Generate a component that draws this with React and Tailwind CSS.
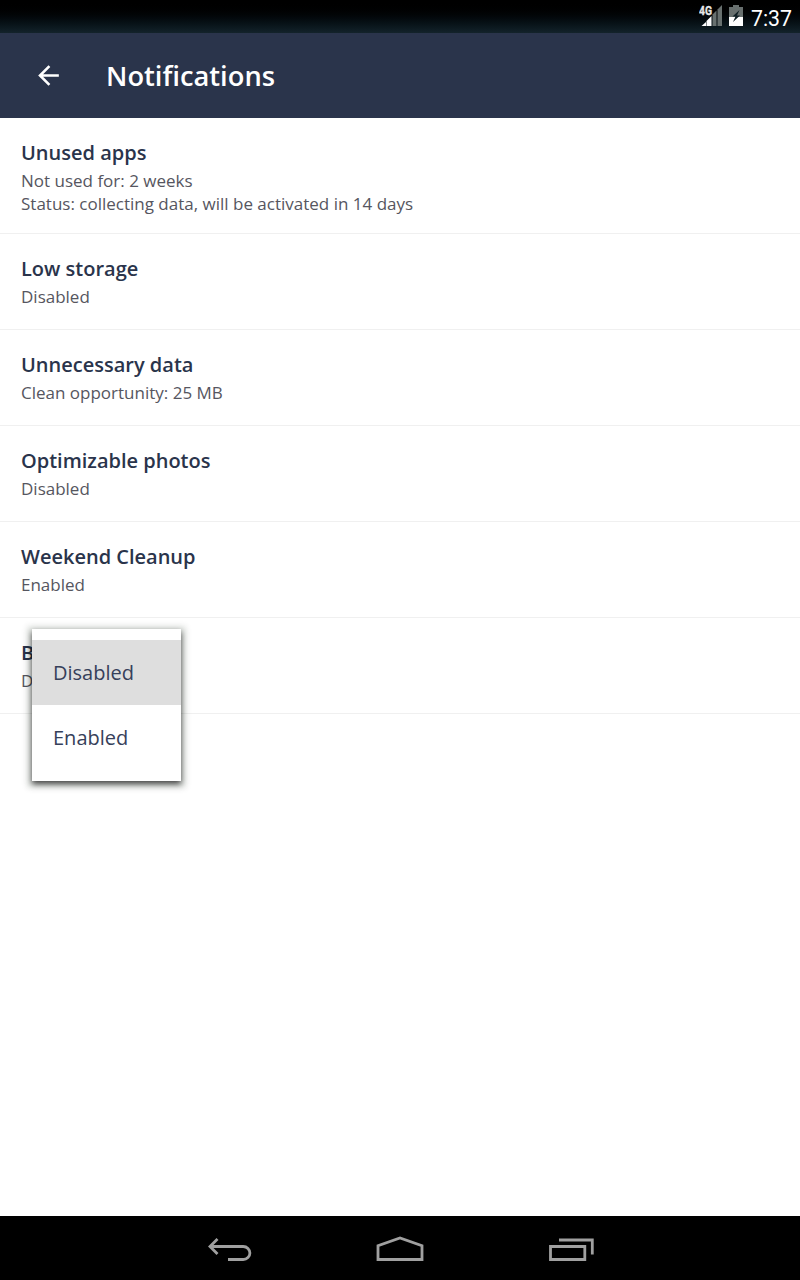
const settings = [
  { title: "Unused apps", lines: ["Not used for: 2 weeks", "Status: collecting data, will be activated in 14 days"] },
  { title: "Low storage", lines: ["Disabled"] },
  { title: "Unnecessary data", lines: ["Clean opportunity: 25 MB"] },
  { title: "Optimizable photos", lines: ["Disabled"] },
  { title: "Weekend Cleanup", lines: ["Enabled"] },
  { title: "B", lines: ["Disabled"] },
];

function SignalIcon() {
  return (
    <svg width="24" height="24" viewBox="0 0 24 24" className="shrink-0">
      <path d="M2.500 22L7 18V22Z" fill="#fff" />
      <path d="M7.500 17L12.500 12V22H7.500Z" fill="#fff" />
      <path d="M13.500 10.500L17.500 6.500V22H13.500Z" fill="#68706f" />
      <path d="M18.500 5.500L23 1V22H18.500Z" fill="#68706f" />
      <text x="0" y="11.300" textLength="13" lengthAdjust="spacingAndGlyphs" fill="#e8e8e8" stroke="#e8e8e8" strokeWidth="0.300" fontSize="12.300" fontWeight="700" fontFamily="Roboto, sans-serif">4G</text>
    </svg>
  );
}

function BatteryIcon() {
  return (
    <svg width="14" height="21" viewBox="0 0 14 21" className="shrink-0">
      <path d="M4 0H10V2H14V12H0V2H4Z" fill="#68706f" />
      <path d="M0 12H14V21H0Z" fill="#fff" />
      <path d="M10.500 5L3.500 11.500H6.500L4 17L11 10.500H8Z" fill="#102026" />
    </svg>
  );
}

function StatusBar() {
  return (
    <div className="flex h-[33px] shrink-0 items-start justify-end bg-linear-to-b from-black to-[#13232b] pr-2 text-white">
      <div className="mt-[4px] mr-[6px] flex"><SignalIcon /></div>
      <div className="mt-[5px] mr-[8px] flex"><BatteryIcon /></div>
      <span className="mt-[6px] font-[Roboto,sans-serif] text-[21.300px] leading-[26px]">7:37</span>
    </div>
  );
}

function Popup() {
  return (
    <div className="absolute top-[629px] left-8 w-[149px] bg-white pt-[11px] pb-[11px] text-[20px] text-[#36405a] shadow-[0_3px_6px_0_rgba(0,0,0,0.72),0_2px_6px_5px_rgba(0,30,0,0.12)]">
      <div className="flex h-[65px] items-center bg-[#dedede] pl-[21px]">Disabled</div>
      <div className="flex h-[65px] items-center pl-[21px]">Enabled</div>
    </div>
  );
}

function NavBar() {
  return (
    <div className="flex h-16 shrink-0 items-center justify-center bg-black">
      <svg width="516" height="64" viewBox="0 0 516 64" fill="none" stroke="#a0a0a0" strokeWidth="2.800">
        <path d="M68 30.500H101.200C105 30.500 107.900 33.500 107.900 37S105 43.500 101.200 43.500H86" />
        <path d="M75.500 23L68 30.500L75.500 38" />
        <path d="M236 43.500V29.800L258 22L280 29.800V43.500Z" />
        <path d="M408.500 30.500H442.800V43.500H408.500Z" />
        <path d="M417 24H450.300V38.500" />
      </svg>
    </div>
  );
}

export default function App() {
  return (
    <div className="relative flex h-[1280px] w-[800px] flex-col overflow-hidden bg-white font-['Open_Sans',sans-serif]">
      <StatusBar />
      <header className="flex h-[85px] shrink-0 items-center bg-[#2a344b] pl-[33px] text-white">
        <svg width="31" height="31" viewBox="0 0 24 24" fill="#fff" className="mb-px">
          <path d="M20 11H7.830l5.590-5.590L12 4l-8 8 8 8 1.410-1.410L7.830 13H20v-2z" />
        </svg>
        <h1 className="ml-[42px] pt-px text-[27.300px] font-semibold">Notifications</h1>
      </header>
      <main className="grow">
        {settings.map(({ title, lines }) => (
          <section key={title} className="border-b border-[#f0f0f0] px-[21px] pt-[21px] pb-[18px]">
            <h2 className="text-[20px] leading-[27px] font-semibold text-[#2a344b]">{title}</h2>
            <div className="pt-[3px] text-[17px] text-[#565660]">
              {lines.map((line) => (
                <p key={line} className="h-[23px] leading-[23px] only:mb-[3px]">{line}</p>
              ))}
            </div>
          </section>
        ))}
      </main>
      <Popup />
      <NavBar />
    </div>
  );
}
